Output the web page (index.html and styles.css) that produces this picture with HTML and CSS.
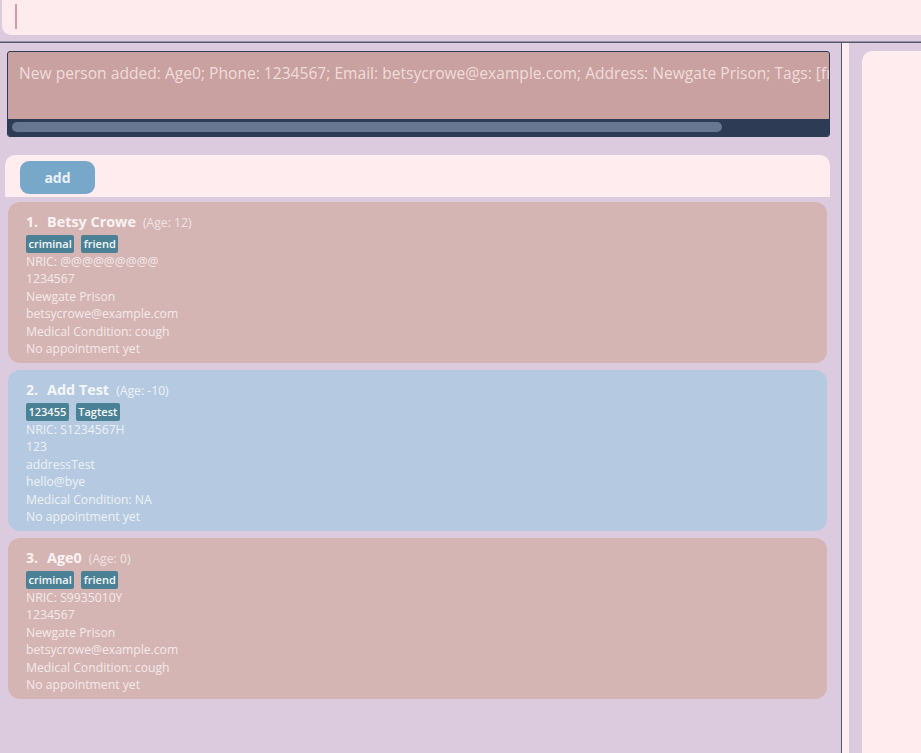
FILE: index.html
```html
<!DOCTYPE html>
<html>
<head>
<meta charset="utf-8">
<link rel="stylesheet" href="styles.css">
</head>
<body>
<div class="command">
  <div class="caret"></div>
</div>
<div class="hline"></div>
<div class="main">
  <div class="left">
    <div class="result">
      <div class="result-text">New person added: Age0; Phone: 1234567; Email: betsycrowe@example.com; Address: Newgate Prison; Tags: [friend][criminal]</div>
      <div class="scrollbar"><div class="thumb"></div></div>
    </div>
    <div class="list">
      <div class="list-header"><button class="add-btn">add</button></div>
      <div class="cards">
        <div class="card pink">
          <div class="name-row"><span class="idx">1.</span><span class="name">Betsy Crowe</span><span class="age">(Age: 12)</span></div>
          <div class="tags"><span class="tag">criminal</span><span class="tag">friend</span></div>
          <div class="line">NRIC: @@@@@@@@@</div>
          <div class="line">1234567</div>
          <div class="line">Newgate Prison</div>
          <div class="line">betsycrowe@example.com</div>
          <div class="line">Medical Condition: cough</div>
          <div class="line">No appointment yet</div>
        </div>
        <div class="card blue">
          <div class="name-row"><span class="idx">2.</span><span class="name">Add Test</span><span class="age">(Age: -10)</span></div>
          <div class="tags"><span class="tag">123455</span><span class="tag">Tagtest</span></div>
          <div class="line">NRIC: S1234567H</div>
          <div class="line">123</div>
          <div class="line">addressTest</div>
          <div class="line">hello@bye</div>
          <div class="line">Medical Condition: NA</div>
          <div class="line">No appointment yet</div>
        </div>
        <div class="card pink">
          <div class="name-row"><span class="idx">3.</span><span class="name">Age0</span><span class="age">(Age: 0)</span></div>
          <div class="tags"><span class="tag">criminal</span><span class="tag">friend</span></div>
          <div class="line">NRIC: S9935010Y</div>
          <div class="line">1234567</div>
          <div class="line">Newgate Prison</div>
          <div class="line">betsycrowe@example.com</div>
          <div class="line">Medical Condition: cough</div>
          <div class="line">No appointment yet</div>
        </div>
      </div>
    </div>
  </div>
  <div class="vline"></div>
  <div class="strip"></div>
  <div class="gutter"></div>
  <div class="right-panel"></div>
</div>
</body>
</html>
```
FILE: styles.css
```css
* { box-sizing: border-box; }
html, body {
  margin: 0;
  padding: 0;
}
body {
  width: 921px;
  height: 753px;
  overflow: hidden;
  background: #dccadf;
  font-family: "Open Sans", "Noto Sans", sans-serif;
  display: flex;
  flex-direction: column;
}
.command {
  height: 35px;
  margin-left: 2px;
  background: #feebee;
  border-bottom-left-radius: 9px;
  display: flex;
  align-items: flex-start;
  padding: 4px 0 0 13px;
  flex-shrink: 0;
}
.caret {
  width: 2px;
  height: 25px;
  background: #d49ba8;
}
.hline {
  margin-top: 6px;
  height: 2px;
  border-top: 1px solid #9a90a8;
  background: #535a6e;
  flex-shrink: 0;
}
.main {
  display: flex;
  flex: 1;
  min-height: 0;
}
.left {
  width: 841px;
  padding-top: 8px;
  flex-shrink: 0;
}
.result {
  margin-left: 7px;
  width: 823px;
  height: 86px;
  border: 1px solid #2d3a53;
  border-radius: 3px;
  background: #c9a1a0;
  display: flex;
  flex-direction: column;
  overflow: hidden;
}
.result-text {
  flex: 1;
  padding: 11px 0 0 11px;
  font-size: 15.6px;
  line-height: 20px;
  color: #f1dcdc;
  white-space: nowrap;
  overflow: hidden;
}
.scrollbar {
  height: 17px;
  background: #2e3b55;
  padding: 3px 0 0 4px;
}
.thumb {
  width: 710px;
  height: 10px;
  border-radius: 5px;
  background: #687791;
}
.list {
  margin: 18px 0 0 5px;
  width: 825px;
}
.list-header {
  height: 42px;
  background: #feecee;
  border-radius: 10px 10px 0 0;
  padding: 6px 0 0 15px;
}
.add-btn {
  width: 75px;
  height: 33px;
  border: none;
  border-radius: 9px;
  background: #77a8ca;
  color: #eaf1f7;
  font-family: "Open Sans", sans-serif;
  font-weight: 700;
  font-size: 14px;
  padding: 0;
}
.cards {
  padding: 5px 3px 0 3px;
  display: flex;
  flex-direction: column;
  gap: 7px;
}
.card {
  height: 161px;
  border-radius: 12px;
  padding: 10px 18px 0 18px;
  color: #f5e9e9;
}
.card.pink { background: #d4b5b4; }
.card.blue { background: #b5cae0; color: #eef1f7; }
.name-row {
  display: flex;
  align-items: baseline;
  line-height: 20px;
  height: 20px;
}
.idx {
  font-weight: 700;
  font-size: 14px;
  color: #fbf1f1;
  width: 21px;
}
.name {
  font-weight: 700;
  font-size: 14.4px;
  color: #fbf2f2;
  margin-right: 7px;
}
.card.blue .idx, .card.blue .name { color: #f4f6fa; }
.age {
  font-size: 12.2px;
  color: #f0e3e3;
}
.card.blue .age { color: #eef1f7; }
.tags {
  display: flex;
  gap: 7px;
  margin-top: 3px;
  height: 18px;
}
.tag {
  background: #4b8194;
  color: #f4f8fa;
  font-size: 11px;
  font-weight: 600;
  line-height: 18px;
  padding: 0 2.5px;
  border-radius: 2px;
}
.line {
  font-size: 12.2px;
  line-height: 17.4px;
  white-space: nowrap;
}
.vline {
  width: 1px;
  background: #50576b;
  flex-shrink: 0;
}
.strip {
  width: 7px;
  background: #fdeef0;
  flex-shrink: 0;
}
.gutter {
  width: 13px;
  flex-shrink: 0;
}
.right-panel {
  flex: 1;
  margin-top: 8px;
  background: #feecee;
  border-top-left-radius: 10px;
}
```
